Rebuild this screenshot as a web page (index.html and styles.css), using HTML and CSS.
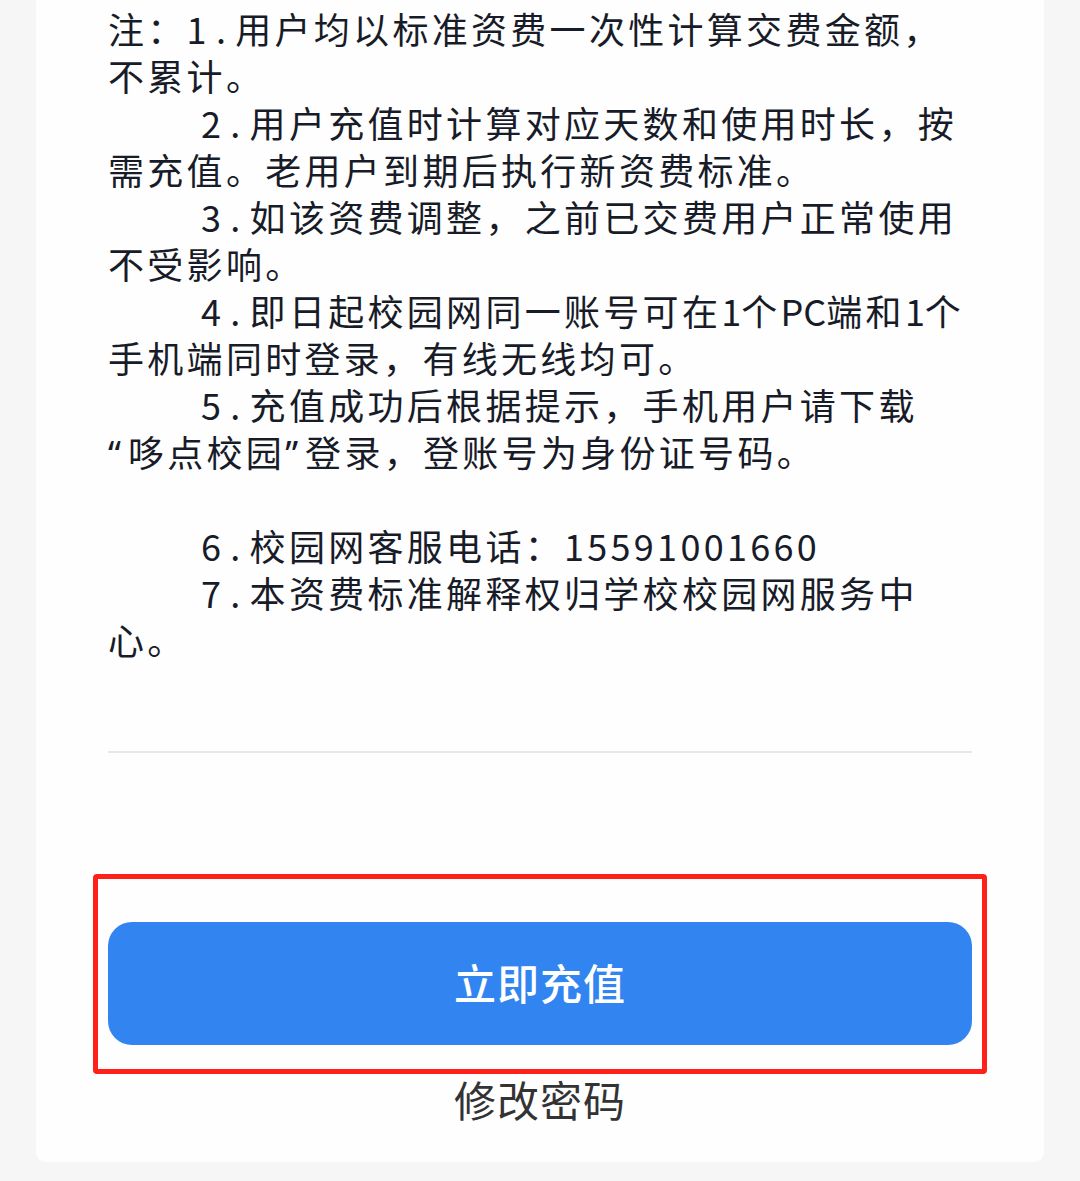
FILE: index.html
```html
<!DOCTYPE html>
<html lang="zh-CN">
<head>
<meta charset="utf-8">
<title>资费说明</title>
<link rel="stylesheet" href="styles.css">
</head>
<body>
<div class="card">
  <div class="notes">
    <p class="note first">注：1<span class="dot">.</span>用户均以标准资费一次性计算交费金额，不累计。</p>
    <p class="note">2<span class="dot">.</span>用户充值时计算对应天数和使用时长，按需充值。老用户到期后执行新资费标准。</p>
    <p class="note">3<span class="dot">.</span>如该资费调整，之前已交费用户正常使用不受影响。</p>
    <p class="note">4<span class="dot">.</span>即日起校园网同一账号可在<span class="lat">1</span>个<span class="lat">PC</span>端和<span class="lat">1</span>个手机端同时登录，有线无线均可。</p>
    <p class="note">5<span class="dot">.</span>充值成功后根据提示，手机用户请下载<span class="quote">“</span>哆点校园<span class="quote">”</span>登录，登账号为身份证号码。</p>
    <p class="note blank">&nbsp;</p>
    <p class="note">6<span class="dot">.</span>校园网客服电话：15591001660</p>
    <p class="note">7<span class="dot">.</span>本资费标准解释权归学校校园网服务中心。</p>
  </div>
  <div class="divider"></div>
  <div class="actions">
    <div class="btn-wrap">
      <button class="btn-primary">立即充值</button>
      <span class="highlight"></span>
    </div>
    <a class="link">修改密码</a>
  </div>
</div>
</body>
</html>
```

FILE: styles.css
```css
html, body {
  margin: 0;
  padding: 0;
}
body {
  background: #f6f6f6;
  font-family: "Noto Sans CJK SC", "Noto Sans", sans-serif;
  width: 1080px;
  height: 1181px;
  overflow: hidden;
}
.card {
  margin-left: 36px;
  width: 1008px;
  box-sizing: border-box;
  padding: 5px 72px 0 72px;
  height: 1162px;
  background: #fefefe;
  border-radius: 0 0 10px 10px;
}
.notes {
  color: #181b28;
  font-size: 36px;
  line-height: 47px;
  letter-spacing: 3.3px;
  padding-right: 2px;
}
.note {
  margin: 0;
  text-indent: 93px;
}
.note.first {
  text-indent: 0;
}
.dot {
  padding: 0 6px;
}
.lat {
  letter-spacing: 0;
}
.quote {
  font-family: "Noto Sans", "DejaVu Sans", sans-serif;
  letter-spacing: 7px;
  line-height: 1;
}
.divider {
  margin-top: 88px;
  height: 2px;
  background: #e8e8e8;
}
.actions {
  display: flex;
  flex-direction: column;
  align-items: center;
  padding-top: 169px;
}
.btn-wrap {
  position: relative;
  width: 100%;
}
.btn-primary {
  display: block;
  width: 100%;
  height: 123px;
  border: none;
  border-radius: 24px;
  background: #3285f0;
  color: #ffffff;
  font-family: "Noto Sans CJK SC", "Noto Sans", sans-serif;
  font-size: 42px;
  font-weight: 500;
  letter-spacing: 1px;
  padding: 0 0 5px 0;
}
.highlight {
  position: absolute;
  left: -15px;
  right: -15px;
  top: -48px;
  bottom: -29px;
  border: 5px solid #ff2119;
  border-radius: 4px;
}
.link {
  margin-top: 26px;
  font-size: 42px;
  line-height: 56px;
  color: #333333;
  letter-spacing: 1px;
}
```
